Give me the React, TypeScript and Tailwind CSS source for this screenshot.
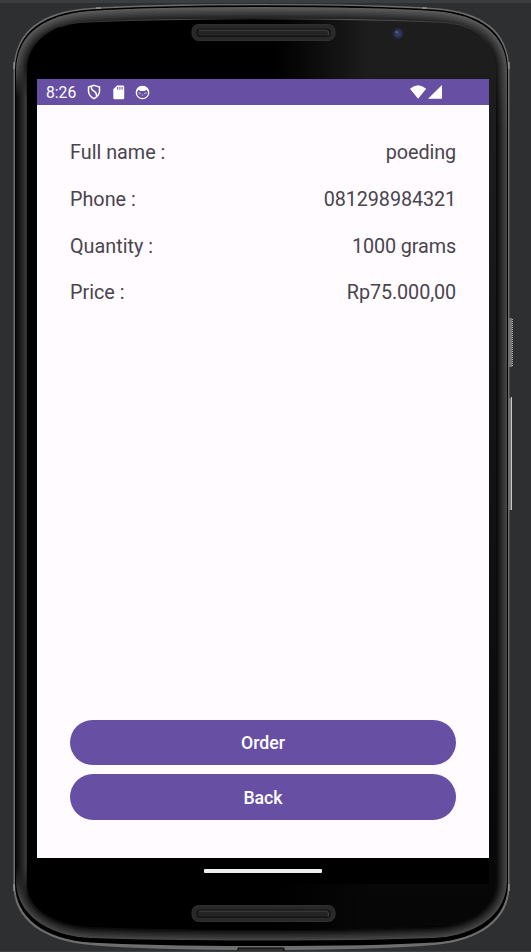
import React from 'react';

const OUTER =
  'M13.5 69 C15 30 42 11.5 90 8 Q150 4 262 4 Q374 4 434 8 C482 11.5 508 30 509.5 69 V887 C509 920 480 941 434 945 Q374 950 262 950 Q150 950 90 945 C44 941 14 920 13.5 887 Z';
const RIM =
  'M15 69 C16 32 43 13 90 9.5 Q150 5.2 262 5.2 Q374 5.2 434 9.5 C481 13 507 32 508 69 V884 C507.5 918 480 939 434 942.5 Q374 946 262 946 Q150 946 90 942.5 C44 939 15.5 918 15 884 Z';
const BEVEL =
  'M16 69 C17 34 44 14.5 90 11 Q150 7 262 7 Q374 7 434 11 C480 14.5 506 34 507 69 V882 C506 914 478 935.5 434 938 Q374 940.5 262 940.5 Q150 940.5 90 938 C46 935.5 17 914 16 882 Z';
const GLASS =
  'M27 66 C29 44 49 25 80 22.5 Q145 19 262 19 Q379 19 445 22.5 C474 25 494 42 496 66 V882 C495 908 475 922 445 925 Q379 930 262 930 Q145 930 80 924 C47 920 28 908 27 882 Z';

const bevelWidths = [22, 19, 16, 13, 10, 7, 4.5, 2];

function Speaker({ y }: { y: number }) {
  return (
    <g>
      <rect x="192" y={y} width="143" height="16" rx="6.5" fill="#292929" stroke="#303030" />
      <rect x="197" y={y + 4.8} width="133" height="7" rx="3" fill="#242424" stroke="#151515" strokeWidth="1.5" />
      <path d={`M199 ${y + 5.7} H327 q3 2 1 5.5`} fill="none" stroke="#404040" strokeWidth="1" />
    </g>
  );
}

function PhoneFrame() {
  return (
    <svg className="absolute inset-0" width="531" height="952" viewBox="0 0 531 952" aria-hidden="true">
      <defs>
        <clipPath id="bevelClip">
          <path d={BEVEL} />
        </clipPath>
        <linearGradient id="base" x1="0" x2="0" y1="5" y2="130" gradientUnits="userSpaceOnUse">
          <stop offset="0" stopColor="#202020" />
          <stop offset="0.5" stopColor="#0e0e0e" />
          <stop offset="1" stopColor="#000" />
        </linearGradient>
        <linearGradient id="leftSide" x1="16" x2="27" gradientUnits="userSpaceOnUse">
          <stop offset="0" stopColor="#080808" />
          <stop offset="0.25" stopColor="#151515" />
          <stop offset="0.65" stopColor="#292929" />
          <stop offset="0.9" stopColor="#3c3c3c" />
          <stop offset="1" stopColor="#222" />
        </linearGradient>
        <linearGradient id="sideFade" x1="0" x2="0" y1="65" y2="900" gradientUnits="userSpaceOnUse">
          <stop offset="0" stopColor="#000" />
          <stop offset="0.04" stopColor="#fff" />
          <stop offset="0.96" stopColor="#fff" />
          <stop offset="1" stopColor="#000" />
        </linearGradient>
        <mask id="sideMask" maskUnits="userSpaceOnUse" x="0" y="60" width="40" height="850">
          <rect y="60" width="40" height="850" fill="url(#sideFade)" />
        </mask>
        <linearGradient id="shine" x1="275" x2="370" gradientUnits="userSpaceOnUse">
          <stop offset="0" stopColor="#000" />
          <stop offset="1" stopColor="#1d1d1d" />
        </linearGradient>
        <linearGradient id="fade" x1="0" x2="0" y1="100" y2="900" gradientUnits="userSpaceOnUse">
          <stop offset="0" stopColor="#000" stopOpacity="0" />
          <stop offset="1" stopColor="#000" stopOpacity="0.78" />
        </linearGradient>
        <linearGradient id="glint" x1="60" x2="480" gradientUnits="userSpaceOnUse">
          <stop offset="0" stopColor="#333" />
          <stop offset="0.28" stopColor="#666" />
          <stop offset="0.45" stopColor="#222" />
          <stop offset="0.7" stopColor="#777" />
          <stop offset="1" stopColor="#333" />
        </linearGradient>
        <radialGradient id="lens">
          <stop offset="0" stopColor="#3c4773" />
          <stop offset="0.45" stopColor="#2b3252" />
          <stop offset="0.75" stopColor="#1e2029" />
          <stop offset="1" stopColor="#1b1b1c" />
        </radialGradient>
      </defs>
      <rect width="531" height="952" fill="#2e2f31" />
      <rect width="531" height="3" fill="#3b3e41" />
      <rect y="951" width="531" height="1" fill="#3c4146" />
      <path d="M509 318 h3 v49 h-3z" fill="#777" />
      <path d="M512.5 319 v48" stroke="#bbb" strokeDasharray="1 1" />
      <path d="M509 398 h2 v112 h-2z" fill="#777" />
      <path d="M511.5 397 v113" stroke="#c8c8c8" />
      <path d={OUTER} fill="#6e6e6e" />
      <path d={RIM} fill="#000" />
      <path d={BEVEL} fill="url(#base)" />
      <g clipPath="url(#bevelClip)">
        {bevelWidths.map((width) => (
          <path key={width} d={BEVEL} fill="none" stroke="#fff" strokeOpacity="0.042" strokeWidth={width} />
        ))}
        <rect x="16" y="60" width="12" height="850" fill="url(#leftSide)" mask="url(#sideMask)" />
      </g>
      <path d={GLASS} fill="url(#shine)" />
      <path d={GLASS} fill="url(#fade)" />
      <path
        d="M60 27 Q68 23.5 80 22.5 Q145 19 262 19 Q379 19 445 22.5 Q475 25 488 43"
        fill="none"
        stroke="url(#glint)"
        strokeWidth="0.7"
      />
      <path d="M96 8 h5 M422 8 h5" stroke="#aaa" />
      <path d="M14 62 v7 M509 62 v7 M14 884 v7 M509 884 v7" stroke="#aaa" />
      <Speaker y={24.5} />
      <Speaker y={905.5} />
      <circle cx="398" cy="33.5" r="7.5" fill="url(#lens)" />
      <circle cx="396.5" cy="32" r="1" fill="#62719c" />
      <path d="M238 951 V948 H284 V951" fill="#303030" stroke="#050505" />
    </svg>
  );
}

function StatusBar() {
  return (
    <div className="flex h-[26.3px] items-center bg-[#6750a4] pl-[9px] text-white">
      <span className="w-[41px] pt-[2px] text-[15.7px] leading-none">8:26</span>
      <svg width="14" height="16" viewBox="0 0 14 16" fill="none" stroke="white" strokeWidth="1.5" aria-hidden="true">
        <path d="M7 1.4 L12.5 3 V7.5 Q12 12 7 14.6 Q2 12 1.5 7.5 V3 Z" />
        <path d="M4.6 2.3 Q3.7 5.3 6.8 7 T9.5 12.7" />
      </svg>
      <svg className="ml-[12px]" width="12" height="15" viewBox="0 0 12 15" aria-hidden="true">
        <path d="M4 .5 H10 Q11.2 .5 11.2 1.7 V13 Q11.2 14.2 10 14.2 H1.5 Q.3 14.2 .3 13 V4.2 Z" fill="white" />
        <path d="M4.7 2 V4.7 M6.9 2 V4.7 M9.1 2 V4.7" stroke="#6750a4" />
      </svg>
      <svg className="ml-[10px]" width="15" height="15" viewBox="0 0 15 15" aria-hidden="true">
        <circle cx="7.5" cy="7.5" r="6.2" fill="none" stroke="white" strokeWidth="1.3" />
        <path d="M1.6 7.5 Q1 1 7.5 1 T13.4 7.5 L11.5 4.8 L9.7 6 H5.3 L3.5 4.8 Z" fill="white" />
        <path d="M4 7 V8.5 M11 7 V8.5 M5.3 8 V9.2 M9.7 8 V9.2 M6.8 10 H8.2" stroke="white" strokeWidth=".7" />
      </svg>
      <svg className="ml-auto mr-[46px]" width="34" height="16" viewBox="0 0 34 16" fill="white" aria-hidden="true">
        <path d="M1 4.7 Q9 -2.3 17.2 4.7 L9.1 14.8 Z" />
        <path d="M19 14.8 L33 1 V14.8 Z" />
      </svg>
    </div>
  );
}

const details = [
  ['Full name :', 'poeding'],
  ['Phone :', '081298984321'],
  ['Quantity :', '1000 grams'],
  ['Price :', 'Rp75.000,00'],
];

export default function App() {
  return (
    <div className="relative h-[952px] w-[531px] overflow-hidden pl-[37px] pt-[79px] font-['Roboto',sans-serif]">
      <PhoneFrame />
      <main className="relative flex h-[805px] w-[452px] flex-col bg-black">
        <StatusBar />
        <section className="flex h-[752.4px] flex-col bg-[#fffbff] px-[33px] pb-[37.7px] pt-[24.7px]">
          <dl>
            {details.map(([label, value]) => (
              <div key={label} className="flex h-[46.6px] items-center justify-between text-[19.8px] text-[#49454e]">
                <dt>{label}</dt>
                <dd className="tracking-[-0.1px]">{value}</dd>
              </div>
            ))}
          </dl>
          <div className="mt-auto flex flex-col gap-[9px]">
            {['Order', 'Back'].map((label) => (
              <button
                key={label}
                type="button"
                className="h-[45.7px] rounded-full bg-[#6750a4] pt-[2.5px] text-[17.7px] font-medium text-white"
              >
                {label}
              </button>
            ))}
          </div>
        </section>
        <div className="flex flex-1 items-center justify-center">
          <div className="h-[4.5px] w-[118px] rounded-[1px] bg-[#eee]" />
        </div>
      </main>
    </div>
  );
}
